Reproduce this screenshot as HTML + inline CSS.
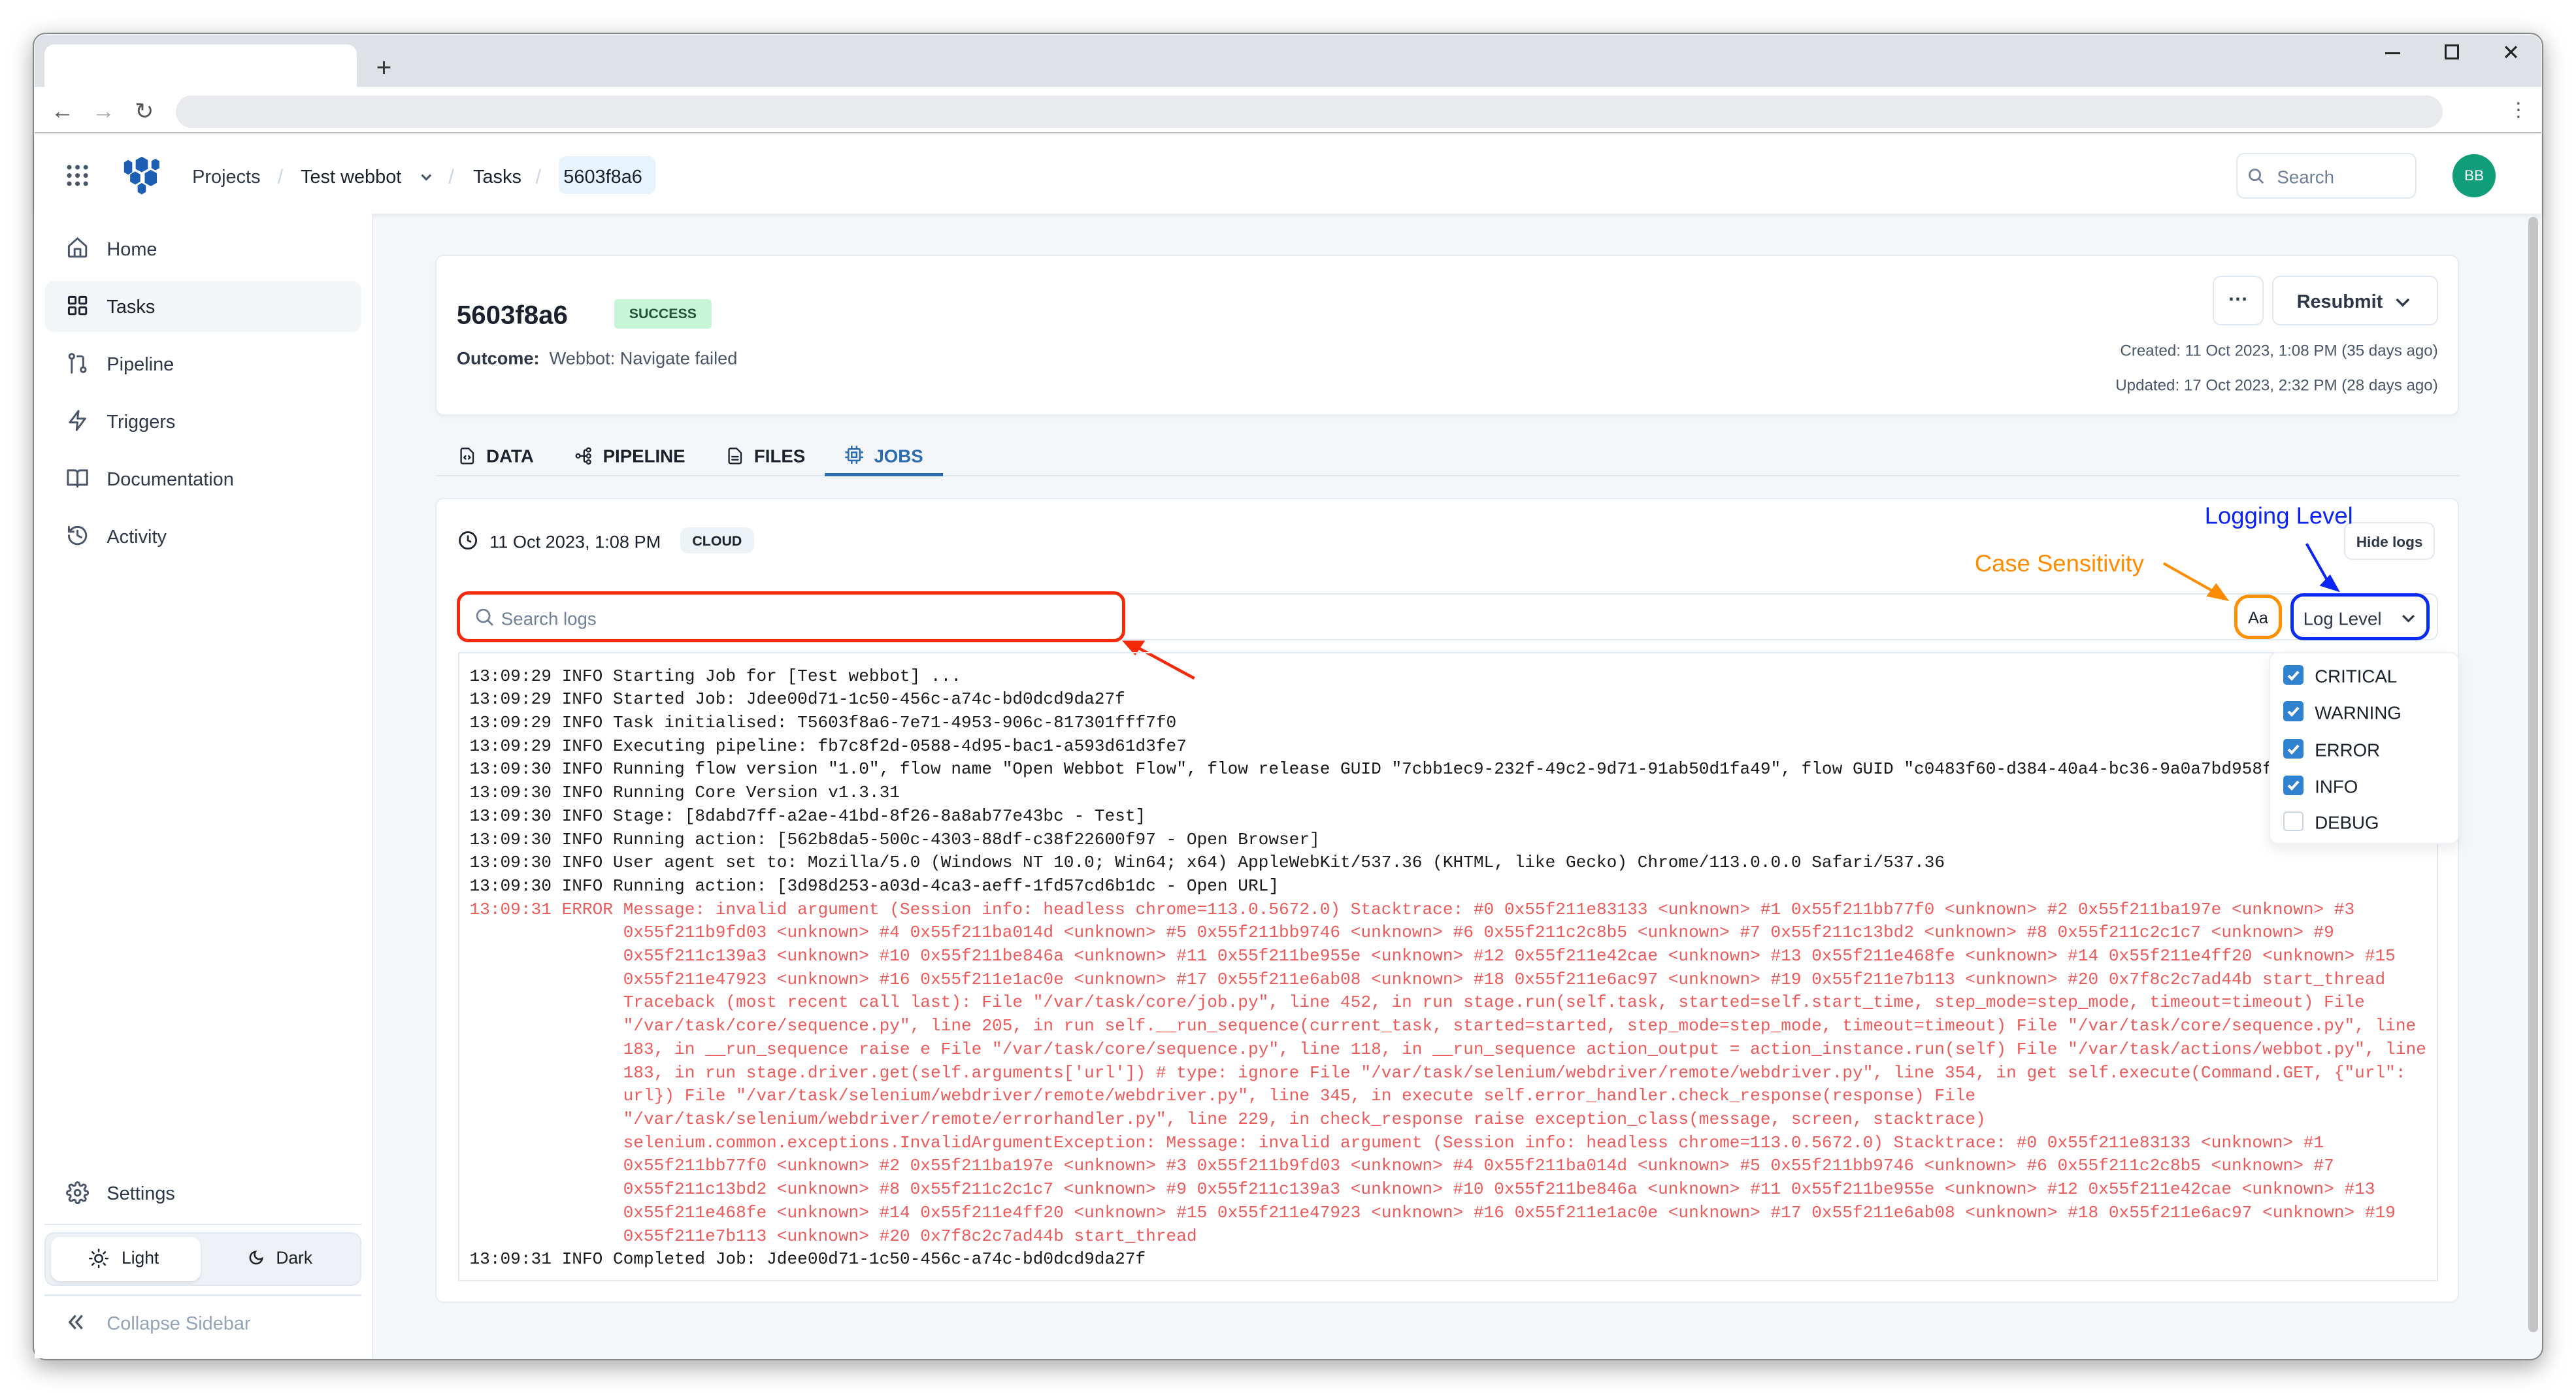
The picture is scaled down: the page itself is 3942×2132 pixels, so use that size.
<!DOCTYPE html>
<html><head><meta charset="utf-8"><style>
*{box-sizing:border-box;margin:0;padding:0}
html,body{width:3942px;height:2132px;overflow:hidden;background:#fff}
#z{zoom:2.514;width:1568px;height:848px;position:relative;font-family:"Liberation Sans",sans-serif;color:#1a202c}
.a{position:absolute}
.win{left:20px;top:20px;width:1528px;height:808px;background:#f4f7fa;border-radius:8px;overflow:hidden;box-shadow:0 4px 14px rgba(0,0,0,.35);border:1px solid #888}
.ico{position:absolute;width:14px;height:14px;fill:none;stroke:#4a5568;stroke-width:2;stroke-linecap:round;stroke-linejoin:round}
.nav{position:absolute;left:65px;font-size:11.5px;color:#2d3748;transform:translateY(calc(-50% + 1px))}
.t{position:absolute;transform:translateY(calc(-50% + 1px));white-space:nowrap}
.logs{font-family:"Liberation Mono",monospace;font-size:10.4px;line-height:14.2px;white-space:pre;color:#1a1a1a}
.err{color:#ec5b5b}
.cb{position:absolute;left:1390px;width:12px;height:12px;border-radius:2px;background:#3182ce}
.cb svg{position:absolute;left:1px;top:1px;width:10px;height:10px}
.dl{position:absolute;left:1409px;font-size:11px;color:#1a202c;transform:translateY(calc(-50% + 1px))}
.ti{position:absolute;width:11px;height:11px;fill:none;stroke:#1a202c;stroke-width:2;stroke-linecap:round;stroke-linejoin:round}
</style></head><body><div id="z">
<div class="a win"></div>
<div class="a" style="left:21px;top:21px;width:1526px;height:32px;background:#dee1e6;border-radius:7px 7px 0 0"></div>
<div class="a" style="left:27px;top:27px;width:190px;height:27px;background:#fff;border-radius:6px 6px 0 0"></div>
<div class="t" style="left:229px;top:40px;font-size:16px;color:#333">+</div>
<div class="a" style="left:1452px;top:32px;width:9px;height:1.2px;background:#222"></div>
<div class="a" style="left:1488px;top:27px;width:9px;height:9px;border:1.3px solid #222"></div>
<div class="t" style="left:1523px;top:31px;font-size:13px;color:#222">✕</div>
<div class="a" style="left:21px;top:53px;width:1526px;height:28px;background:#fff;border-bottom:1px solid #bbb"></div>
<div class="t" style="left:31px;top:67px;font-size:14px;color:#555">←</div>
<div class="t" style="left:56px;top:67px;font-size:14px;color:#aaa">→</div>
<div class="t" style="left:82px;top:67px;font-size:14px;color:#555">↻</div>
<div class="a" style="left:107px;top:58px;width:1380px;height:20px;background:#e8eaed;border-radius:10px"></div>
<div class="t" style="left:1527px;top:66px;font-size:12px;color:#555">⋮</div>
<div class="a" style="left:21px;top:82px;width:1526px;height:48px;background:#fff;box-shadow:0 1px 3px rgba(0,0,0,.08)"></div>
<svg class="a" style="left:40px;top:100px" width="14" height="14" viewBox="0 0 14 14" fill="#4a5568"><circle cx="2" cy="2" r="1.4"/><circle cx="7" cy="2" r="1.4"/><circle cx="12" cy="2" r="1.4"/><circle cx="2" cy="7" r="1.4"/><circle cx="7" cy="7" r="1.4"/><circle cx="12" cy="7" r="1.4"/><circle cx="2" cy="12" r="1.4"/><circle cx="7" cy="12" r="1.4"/><circle cx="12" cy="12" r="1.4"/></svg>
<svg class="a" style="left:72px;top:94px" width="28" height="26" viewBox="72 94 28 26" fill="#1d5fb4"><polygon points="78,97.5 80.5,99 80.5,105 78,106.5 75.5,105 75.5,99"/><polygon points="86.3,95.5 90,97.6 90,103 86.3,105 82.6,103 82.6,97.6"/><polygon points="94.6,96.8 97,98.2 97,102.5 94.6,103.8 92.2,102.5 92.2,98.2"/><polygon points="82.3,104.5 85.4,106.3 85.4,110.7 82.3,112.5 79.2,110.7 79.2,106.3"/><polygon points="91.8,103.5 95.5,105.6 95.5,111.4 91.8,113.5 88.1,111.4 88.1,105.6"/><polygon points="86.3,111.5 88.8,113 88.8,117 86.3,118.5 83.8,117 83.8,113"/></svg>
<div class="t" style="left:117px;top:107px;font-size:11.5px;color:#2d3748">Projects</div>
<div class="t" style="left:169px;top:107px;font-size:12px;color:#cbd5e0">/</div>
<div class="t" style="left:183px;top:107px;font-size:11.5px;color:#1a202c">Test webbot</div>
<svg class="a" style="left:255px;top:104px" width="9" height="8" viewBox="0 0 10 8" fill="none" stroke="#4a5568" stroke-width="1.4"><path d="M2 2.5l3 3 3-3"/></svg>
<div class="t" style="left:273px;top:107px;font-size:12px;color:#cbd5e0">/</div>
<div class="t" style="left:288px;top:107px;font-size:11.5px;color:#1a202c">Tasks</div>
<div class="t" style="left:326px;top:107px;font-size:12px;color:#cbd5e0">/</div>
<div class="a" style="left:340px;top:95px;width:59px;height:23px;background:#e8f4fd;border-radius:4px"></div>
<div class="t" style="left:343px;top:107px;font-size:11.5px;color:#1a202c">5603f8a6</div>
<div class="a" style="left:1361px;top:93px;width:110px;height:28px;border:1px solid #e2e8f0;border-radius:5px"></div>
<svg class="a" style="left:1368px;top:102px" width="11" height="11" viewBox="0 0 24 24" fill="none" stroke="#718096" stroke-width="2.4"><circle cx="10" cy="10" r="7"/><path d="M15 15l6 6"/></svg>
<div class="t" style="left:1386px;top:107px;font-size:11px;color:#718096">Search</div>
<div class="a" style="left:1493px;top:94px;width:26px;height:26px;border-radius:13px;background:#0f9d7a;color:#fff;font-size:9px;text-align:center;line-height:26px">BB</div>
<div class="a" style="left:21px;top:130px;width:206px;height:697px;background:#fff;border-right:1px solid #e8ecf1"></div>
<div class="a" style="left:27px;top:171px;width:193px;height:31px;background:#f3f6f9;border-radius:6px"></div>
<svg class="ico" style="left:40px;top:144px" viewBox="0 0 24 24"><path d="M3 10l9-8 9 8v10a1 1 0 0 1-1 1H4a1 1 0 0 1-1-1z"/><path d="M9 21v-8h6v8"/></svg>
<div class="nav" style="top:151px">Home</div>
<svg class="ico" style="left:40px;top:179px;stroke:#1a202c" viewBox="0 0 24 24"><rect x="3" y="3" width="7" height="7" rx="1"/><rect x="14" y="3" width="7" height="7" rx="1"/><rect x="3" y="14" width="7" height="7" rx="1"/><rect x="14" y="14" width="7" height="7" rx="1"/></svg>
<div class="nav" style="top:186px;color:#1a202c">Tasks</div>
<svg class="ico" style="left:40px;top:214px" viewBox="0 0 24 24"><circle cx="6" cy="5" r="2.5"/><path d="M6 8v14"/><circle cx="18" cy="19" r="2.5"/><path d="M12 5h4a2 2 0 0 1 2 2v9.5"/></svg>
<div class="nav" style="top:221px">Pipeline</div>
<svg class="ico" style="left:40px;top:249px" viewBox="0 0 24 24"><path d="M13 2L4 14h8l-1 8 9-12h-8z"/></svg>
<div class="nav" style="top:256px">Triggers</div>
<svg class="ico" style="left:40px;top:284px" viewBox="0 0 24 24"><path d="M2 4h7a3 3 0 0 1 3 3v14a2 2 0 0 0-2-2H2z"/><path d="M22 4h-7a3 3 0 0 0-3 3v14a2 2 0 0 1 2-2h8z"/></svg>
<div class="nav" style="top:291px">Documentation</div>
<svg class="ico" style="left:40px;top:319px" viewBox="0 0 24 24"><path d="M3 12a9 9 0 1 0 3-6.7L3 8"/><path d="M3 3v5h5"/><path d="M12 7v5l4 2"/></svg>
<div class="nav" style="top:326px">Activity</div>
<svg class="ico" style="left:40px;top:719px" viewBox="0 0 24 24"><circle cx="12" cy="12" r="3"/><path d="M19.4 15a1.7 1.7 0 0 0 .3 1.8l.1.1a2 2 0 1 1-2.8 2.8l-.1-.1a1.7 1.7 0 0 0-2.8 1.2V21a2 2 0 1 1-4 0v-.1a1.7 1.7 0 0 0-2.9-1.200l-.1.1a2 2 0 1 1-2.8-2.8l.1-.1A1.7 1.7 0 0 0 3.2 14H3a2 2 0 1 1 0-4h.1a1.7 1.7 0 0 0 1.2-2.9l-.1-.1a2 2 0 1 1 2.8-2.8l.1.1A1.7 1.7 0 0 0 10 3.2V3a2 2 0 1 1 4 0v.1a1.7 1.7 0 0 0 2.9 1.2l.1-.1a2 2 0 1 1 2.8 2.8l-.1.1A1.7 1.7 0 0 0 20.8 10H21a2 2 0 1 1 0 4h-.1a1.7 1.7 0 0 0-1.5 1z"/></svg>
<div class="nav" style="top:726px">Settings</div>
<div class="a" style="left:27px;top:745px;width:193px;height:1px;background:#e2e8f0"></div>
<div class="a" style="left:27px;top:750px;width:193px;height:33px;background:#eef1f5;border-radius:6px;border:1px solid #e2e8f0"></div>
<div class="a" style="left:31px;top:753px;width:91px;height:27px;background:#fff;border-radius:6px;box-shadow:0 1px 2px rgba(0,0,0,.08)"></div>
<svg class="a" style="left:54px;top:760px" width="12" height="12" viewBox="0 0 24 24" fill="none" stroke="#1a202c" stroke-width="2" stroke-linecap="round"><circle cx="12" cy="12" r="4.5"/><path d="M12 1v2.5M12 20.5V23M1 12h2.5M20.5 12H23M4.2 4.2l1.8 1.8M18 18l1.8 1.8M4.2 19.8L6 18M18 6l1.8-1.8"/></svg>
<div class="t" style="left:74px;top:765px;font-size:10.5px;color:#1a202c">Light</div>
<svg class="a" style="left:150px;top:760px" width="11" height="12" viewBox="0 0 24 24" fill="none" stroke="#1a202c" stroke-width="2.2" stroke-linecap="round"><path d="M12 3a8 8 0 1 0 9 9 6.5 6.5 0 0 1-9-9z"/></svg>
<div class="t" style="left:168px;top:765px;font-size:10.5px;color:#1a202c">Dark</div>
<div class="a" style="left:27px;top:788px;width:193px;height:1px;background:#e2e8f0"></div>
<svg class="a" style="left:41px;top:800px" width="10" height="10" viewBox="0 0 10 10" fill="none" stroke="#4a5568" stroke-width="1.3"><path d="M5 1L1.5 5 5 9M9 1L5.5 5 9 9"/></svg>
<div class="t" style="left:65px;top:805px;font-size:11.5px;color:#94a3b8">Collapse Sidebar</div>
<div class="a" style="left:1539px;top:132px;width:6px;height:679px;background:#c4c4c4;border-radius:3px"></div>
<div class="a" style="left:265px;top:155px;width:1232px;height:98px;background:#fff;border:1px solid #e8ecf1;border-radius:5px;box-shadow:0 1px 2px rgba(0,0,0,.04)"></div>
<div class="t" style="left:278px;top:191px;font-size:16px;font-weight:bold;color:#1a202c">5603f8a6</div>
<div class="a" style="left:374px;top:182px;width:59px;height:18px;background:#c6f6d5;border-radius:2px;color:#22543d;font-size:8.5px;font-weight:bold;text-align:center;line-height:18px">SUCCESS</div>
<div class="t" style="left:278px;top:217px;font-size:10.8px;color:#4a5568"><b style="color:#2d3748;font-weight:bold">Outcome:</b>&nbsp; Webbot: Navigate failed</div>
<div class="a" style="left:1347px;top:168px;width:31px;height:30px;border:1px solid #e2e8f0;border-radius:5px;text-align:center;line-height:28px;font-size:12px;color:#2d3748;font-weight:bold">···</div>
<div class="a" style="left:1383px;top:168px;width:101px;height:30px;border:1px solid #e2e8f0;border-radius:5px"></div>
<div class="t" style="left:1398px;top:183px;font-size:11.5px;font-weight:bold;color:#2d3748">Resubmit</div>
<svg class="a" style="left:1457px;top:179px" width="11" height="10" viewBox="0 0 12 10" fill="none" stroke="#2d3748" stroke-width="1.5"><path d="M2 3l4 4 4-4"/></svg>
<div class="t" style="right:84px;top:213px;font-size:9.6px;color:#4a5568">Created: 11 Oct 2023, 1:08 PM (35 days ago)</div>
<div class="t" style="right:84px;top:234px;font-size:9.6px;color:#4a5568">Updated: 17 Oct 2023, 2:32 PM (28 days ago)</div>
<div class="a" style="left:265px;top:289px;width:1232px;height:1px;background:#e2e8f0"></div>
<div class="a" style="left:502px;top:288px;width:72px;height:2px;background:#2b6cb0"></div>
<svg class="ti" style="left:279px;top:272px" viewBox="0 0 24 24"><path d="M14 2H6a2 2 0 0 0-2 2v16a2 2 0 0 0 2 2h12a2 2 0 0 0 2-2V8z"/><path d="M10 12l-2 2 2 2M14 12l2 2-2 2"/></svg>
<div class="t" style="left:296px;top:277px;font-size:11px;font-weight:bold;color:#1a202c">DATA</div>
<svg class="ti" style="left:350px;top:272px" viewBox="0 0 24 24"><circle cx="4" cy="12" r="2.5"/><circle cx="18" cy="4" r="2.5"/><circle cx="18" cy="12" r="2.5"/><circle cx="18" cy="20" r="2.5"/><path d="M6.5 12h9M12 12V6a2 2 0 0 1 2-2h1.5M12 12v6a2 2 0 0 0 2 2h1.5"/></svg>
<div class="t" style="left:367px;top:277px;font-size:11px;font-weight:bold;color:#1a202c">PIPELINE</div>
<svg class="ti" style="left:442px;top:272px" viewBox="0 0 24 24"><path d="M14 2H6a2 2 0 0 0-2 2v16a2 2 0 0 0 2 2h12a2 2 0 0 0 2-2V8z"/><path d="M8 13h8M8 17h8"/></svg>
<div class="t" style="left:459px;top:277px;font-size:11px;font-weight:bold;color:#1a202c">FILES</div>
<svg class="a" style="left:514px;top:271px" width="12" height="12" viewBox="0 0 24 24" fill="none" stroke="#2b6cb0" stroke-width="2"><rect x="5" y="5" width="14" height="14" rx="1"/><rect x="9" y="9" width="6" height="6"/><path d="M9 1v4M15 1v4M9 19v4M15 19v4M1 9h4M1 15h4M19 9h4M19 15h4"/></svg>
<div class="t" style="left:532px;top:277px;font-size:11px;font-weight:bold;color:#2b6cb0">JOBS</div>
<div class="a" style="left:265px;top:303px;width:1232px;height:490px;background:#fff;border:1px solid #e8ecf1;border-radius:5px"></div>
<svg class="a" style="left:279px;top:323px" width="12" height="12" viewBox="0 0 24 24" fill="none" stroke="#1a202c" stroke-width="2.2"><circle cx="12" cy="12" r="10"/><path d="M12 6v6l4 2"/></svg>
<div class="t" style="left:298px;top:329px;font-size:10.8px;color:#1a202c">11 Oct 2023, 1:08 PM</div>
<div class="a" style="left:414px;top:321px;width:45px;height:16px;background:#edf2f7;border-radius:5px;font-size:8.5px;font-weight:bold;color:#1a202c;text-align:center;line-height:17px">CLOUD</div>
<div class="a" style="left:1427px;top:318px;width:55px;height:23px;border:1px solid #e2e8f0;border-radius:5px;font-size:9px;font-weight:bold;color:#2d3748;text-align:center;line-height:23px">Hide logs</div>
<div class="a" style="left:279px;top:361px;width:1205px;height:29px;border:1px solid #e2e8f0;border-radius:5px"></div>
<div class="a" style="left:278px;top:360px;width:407px;height:31px;border:2px solid #f52a0a;border-radius:7px"></div>
<svg class="a" style="left:289px;top:370px" width="12" height="12" viewBox="0 0 24 24" fill="none" stroke="#718096" stroke-width="2.2"><circle cx="10" cy="10" r="7.5"/><path d="M15.5 15.5l6 6"/></svg>
<div class="t" style="left:305px;top:376px;font-size:11px;color:#718096">Search logs</div>
<div class="a" style="left:1360px;top:362px;width:29px;height:27px;border:2px solid #ff9000;border-radius:9px;font-size:10px;color:#1a202c;text-align:center;line-height:25px">Aa</div>
<div class="a" style="left:1394px;top:361px;width:85px;height:29px;border:2px solid #0a2cf0;border-radius:8px"></div>
<div class="t" style="left:1402px;top:376px;font-size:11px;color:#2d3748">Log Level</div>
<svg class="a" style="left:1461px;top:372px" width="10" height="9" viewBox="0 0 12 10" fill="none" stroke="#2d3748" stroke-width="1.5"><path d="M2 3l4 4 4-4"/></svg>
<div class="t" style="left:1202px;top:342px;font-size:14.5px;color:#ff8c00">Case Sensitivity</div>
<div class="t" style="left:1342px;top:313px;font-size:14.5px;color:#0a24f5">Logging Level</div>
<svg class="a" style="left:0;top:0;overflow:visible" width="1568" height="848">
<line x1="1317" y1="343" x2="1349" y2="361" stroke="#ff8c00" stroke-width="1.6"/><polygon points="1357,366 1343,363 1349,355" fill="#ff8c00"/>
<line x1="1404" y1="331" x2="1417" y2="354" stroke="#0a24f5" stroke-width="1.6"/><polygon points="1423,362 1412,355 1420,350" fill="#0a24f5" transform="rotate(-15 1418 356)"/>
<line x1="727" y1="413" x2="692" y2="394" stroke="#f52a0a" stroke-width="1.8"/><polygon points="683,390 697,390 691,399" fill="#f52a0a"/>
</svg>
<div class="a" style="left:279px;top:397px;width:1205px;height:383px;border:1px solid #e2e8f0;overflow:hidden">
<div class="logs" style="position:absolute;left:6px;top:7px">13:09:29 INFO Starting Job for [Test webbot] ...
13:09:29 INFO Started Job: Jdee00d71-1c50-456c-a74c-bd0dcd9da27f
13:09:29 INFO Task initialised: T5603f8a6-7e71-4953-906c-817301fff7f0
13:09:29 INFO Executing pipeline: fb7c8f2d-0588-4d95-bac1-a593d61d3fe7
13:09:30 INFO Running flow version "1.0", flow name "Open Webbot Flow", flow release GUID "7cbb1ec9-232f-49c2-9d71-91ab50d1fa49", flow GUID "c0483f60-d384-40a4-bc36-9a0a7bd958f"
13:09:30 INFO Running Core Version v1.3.31
13:09:30 INFO Stage: [8dabd7ff-a2ae-41bd-8f26-8a8ab77e43bc - Test]
13:09:30 INFO Running action: [562b8da5-500c-4303-88df-c38f22600f97 - Open Browser]
13:09:30 INFO User agent set to: Mozilla/5.0 (Windows NT 10.0; Win64; x64) AppleWebKit/537.36 (KHTML, like Gecko) Chrome/113.0.0.0 Safari/537.36
13:09:30 INFO Running action: [3d98d253-a03d-4ca3-aeff-1fd57cd6b1dc - Open URL]
<span class="err">13:09:31 ERROR Message: invalid argument (Session info: headless chrome=113.0.5672.0) Stacktrace: #0 0x55f211e83133 &lt;unknown&gt; #1 0x55f211bb77f0 &lt;unknown&gt; #2 0x55f211ba197e &lt;unknown&gt; #3
               0x55f211b9fd03 &lt;unknown&gt; #4 0x55f211ba014d &lt;unknown&gt; #5 0x55f211bb9746 &lt;unknown&gt; #6 0x55f211c2c8b5 &lt;unknown&gt; #7 0x55f211c13bd2 &lt;unknown&gt; #8 0x55f211c2c1c7 &lt;unknown&gt; #9
               0x55f211c139a3 &lt;unknown&gt; #10 0x55f211be846a &lt;unknown&gt; #11 0x55f211be955e &lt;unknown&gt; #12 0x55f211e42cae &lt;unknown&gt; #13 0x55f211e468fe &lt;unknown&gt; #14 0x55f211e4ff20 &lt;unknown&gt; #15
               0x55f211e47923 &lt;unknown&gt; #16 0x55f211e1ac0e &lt;unknown&gt; #17 0x55f211e6ab08 &lt;unknown&gt; #18 0x55f211e6ac97 &lt;unknown&gt; #19 0x55f211e7b113 &lt;unknown&gt; #20 0x7f8c2c7ad44b start_thread
               Traceback (most recent call last): File "/var/task/core/job.py", line 452, in run stage.run(self.task, started=self.start_time, step_mode=step_mode, timeout=timeout) File
               "/var/task/core/sequence.py", line 205, in run self.__run_sequence(current_task, started=started, step_mode=step_mode, timeout=timeout) File "/var/task/core/sequence.py", line
               183, in __run_sequence raise e File "/var/task/core/sequence.py", line 118, in __run_sequence action_output = action_instance.run(self) File "/var/task/actions/webbot.py", line
               183, in run stage.driver.get(self.arguments['url']) # type: ignore File "/var/task/selenium/webdriver/remote/webdriver.py", line 354, in get self.execute(Command.GET, {"url":
               url}) File "/var/task/selenium/webdriver/remote/webdriver.py", line 345, in execute self.error_handler.check_response(response) File
               "/var/task/selenium/webdriver/remote/errorhandler.py", line 229, in check_response raise exception_class(message, screen, stacktrace)
               selenium.common.exceptions.InvalidArgumentException: Message: invalid argument (Session info: headless chrome=113.0.5672.0) Stacktrace: #0 0x55f211e83133 &lt;unknown&gt; #1
               0x55f211bb77f0 &lt;unknown&gt; #2 0x55f211ba197e &lt;unknown&gt; #3 0x55f211b9fd03 &lt;unknown&gt; #4 0x55f211ba014d &lt;unknown&gt; #5 0x55f211bb9746 &lt;unknown&gt; #6 0x55f211c2c8b5 &lt;unknown&gt; #7
               0x55f211c13bd2 &lt;unknown&gt; #8 0x55f211c2c1c7 &lt;unknown&gt; #9 0x55f211c139a3 &lt;unknown&gt; #10 0x55f211be846a &lt;unknown&gt; #11 0x55f211be955e &lt;unknown&gt; #12 0x55f211e42cae &lt;unknown&gt; #13
               0x55f211e468fe &lt;unknown&gt; #14 0x55f211e4ff20 &lt;unknown&gt; #15 0x55f211e47923 &lt;unknown&gt; #16 0x55f211e1ac0e &lt;unknown&gt; #17 0x55f211e6ab08 &lt;unknown&gt; #18 0x55f211e6ac97 &lt;unknown&gt; #19
               0x55f211e7b113 &lt;unknown&gt; #20 0x7f8c2c7ad44b start_thread</span>
13:09:31 INFO Completed Job: Jdee00d71-1c50-456c-a74c-bd0dcd9da27f</div>
</div>
<div class="a" style="left:1381px;top:397px;width:116px;height:117px;background:#fff;border:1px solid #edf0f4;border-radius:5px;box-shadow:0 3px 8px rgba(0,0,0,.08)"></div>
<div class="cb" style="top:405px"><svg viewBox="0 0 10 10" fill="none" stroke="#fff" stroke-width="1.6"><path d="M2 5.2l2 2 4-4.4"/></svg></div>
<div class="dl" style="top:411px">CRITICAL</div>
<div class="cb" style="top:427px"><svg viewBox="0 0 10 10" fill="none" stroke="#fff" stroke-width="1.6"><path d="M2 5.2l2 2 4-4.4"/></svg></div>
<div class="dl" style="top:433px">WARNING</div>
<div class="cb" style="top:450px"><svg viewBox="0 0 10 10" fill="none" stroke="#fff" stroke-width="1.6"><path d="M2 5.2l2 2 4-4.4"/></svg></div>
<div class="dl" style="top:456px">ERROR</div>
<div class="cb" style="top:472px"><svg viewBox="0 0 10 10" fill="none" stroke="#fff" stroke-width="1.6"><path d="M2 5.2l2 2 4-4.4"/></svg></div>
<div class="dl" style="top:478px">INFO</div>
<div class="cb" style="top:494px;background:#fff;border:1px solid #cbd5e0"></div>
<div class="dl" style="top:500px">DEBUG</div>
</div></body></html>
